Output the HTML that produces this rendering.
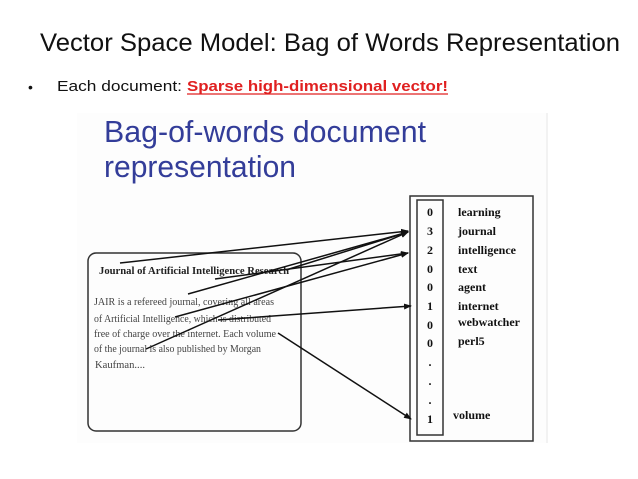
<!DOCTYPE html>
<html><head><meta charset="utf-8"><style>
html,body{margin:0;padding:0;background:#fff;width:638px;height:479px;overflow:hidden}
</style></head><body>
<svg width="638" height="479" viewBox="0 0 638 479" xmlns="http://www.w3.org/2000/svg">
<defs><marker id="ah" markerWidth="8" markerHeight="6" refX="7" refY="3" orient="auto" markerUnits="userSpaceOnUse"><path d="M0,0 L8,3 L0,6 Z" fill="#111"/></marker></defs>
<text x="40" y="51" font-family="Liberation Sans, sans-serif" font-size="25" fill="#111" textLength="580" lengthAdjust="spacingAndGlyphs">Vector Space Model: Bag of Words Representation</text>
<text x="28" y="92" font-family="Liberation Sans, sans-serif" font-size="14" fill="#111">•</text>
<text x="57" y="91" font-family="Liberation Sans, sans-serif" font-size="15" fill="#111" textLength="125" lengthAdjust="spacingAndGlyphs">Each document:</text>
<text x="187" y="91" font-family="Liberation Sans, sans-serif" font-size="15" font-weight="bold" fill="#e02020" textLength="261" lengthAdjust="spacingAndGlyphs">Sparse high-dimensional vector!</text>
<line x1="187" y1="94" x2="448" y2="94" stroke="#e02020" stroke-width="1.3"/>
<rect x="77" y="113" width="470" height="330" fill="#fdfdfd"/>
<line x1="547" y1="113" x2="547" y2="443" stroke="#eee" stroke-width="1.5"/>
<text x="104" y="142" font-family="Liberation Sans, sans-serif" font-size="31" fill="#333d99" textLength="322" lengthAdjust="spacingAndGlyphs">Bag-of-words document</text>
<text x="104" y="177" font-family="Liberation Sans, sans-serif" font-size="31" fill="#333d99" textLength="192" lengthAdjust="spacingAndGlyphs">representation</text>
<rect x="88" y="253" width="213" height="178" rx="8" fill="none" stroke="#333" stroke-width="1.5"/>
<g font-family="Liberation Serif, serif" fill="#444" font-size="10">
<text x="99" y="274" font-weight="bold" fill="#222" textLength="190" lengthAdjust="spacingAndGlyphs">Journal of Artificial Intelligence Research</text>
<text x="94" y="305" textLength="180" lengthAdjust="spacingAndGlyphs">JAIR is a refereed journal, covering all areas</text>
<text x="94" y="322" textLength="177" lengthAdjust="spacingAndGlyphs">of Artificial Intelligence, which is distributed</text>
<text x="94" y="337" textLength="182" lengthAdjust="spacingAndGlyphs">free of charge over the internet. Each volume</text>
<text x="94" y="352" textLength="167" lengthAdjust="spacingAndGlyphs">of the journal is also published by Morgan</text>
<text x="95" y="368" textLength="50" lengthAdjust="spacingAndGlyphs">Kaufman....</text>
</g>
<rect x="410" y="196" width="123" height="245" fill="none" stroke="#333" stroke-width="1.5"/>
<rect x="417" y="200" width="26" height="235" fill="none" stroke="#333" stroke-width="1.5"/>
<g font-family="Liberation Serif, serif" font-size="12" fill="#111" text-anchor="middle" font-weight="bold">
<text x="430" y="216">0</text><text x="430" y="235">3</text><text x="430" y="254">2</text><text x="430" y="273">0</text><text x="430" y="291">0</text><text x="430" y="310">1</text><text x="430" y="329">0</text><text x="430" y="347">0</text><text x="430" y="366">.</text><text x="430" y="385">.</text><text x="430" y="404">.</text><text x="430" y="423">1</text>
</g>
<g font-family="Liberation Serif, serif" font-size="12" fill="#111" font-weight="bold">
<text x="458" y="216">learning</text><text x="458" y="235">journal</text><text x="458" y="254">intelligence</text><text x="458" y="273">text</text><text x="458" y="291">agent</text><text x="458" y="310">internet</text><text x="458" y="326">webwatcher</text><text x="458" y="345">perl5</text><text x="453" y="419">volume</text>
</g>
<g stroke="#111" stroke-width="1.5" fill="none" marker-end="url(#ah)">
<line x1="120" y1="263" x2="408" y2="231"/>
<line x1="215" y1="279" x2="408" y2="253"/>
<line x1="286" y1="270" x2="408" y2="232"/>
<line x1="188" y1="294" x2="408" y2="232"/>
<line x1="175" y1="317" x2="408" y2="253"/>
<line x1="146" y1="349" x2="408" y2="232"/>
<line x1="218" y1="320" x2="411" y2="306"/>
<line x1="278" y1="333" x2="411" y2="419"/>
</g>
</svg>
</body></html>
